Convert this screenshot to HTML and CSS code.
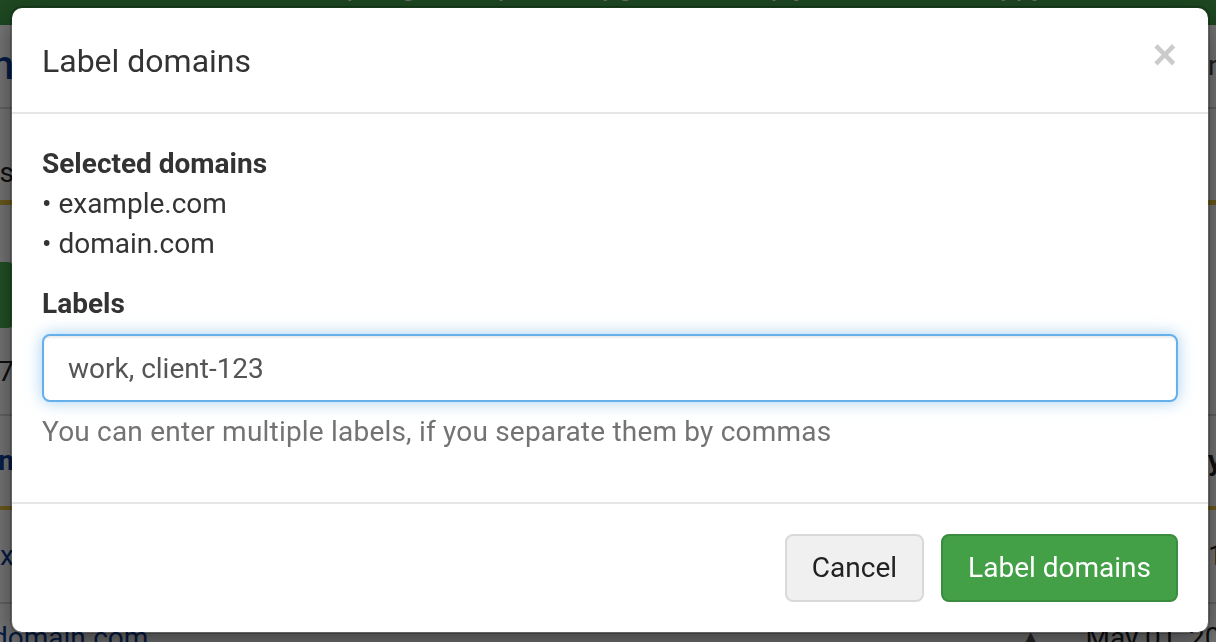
FILE: index.html
```html
<!DOCTYPE html>
<html lang="en">
<head>
<meta charset="utf-8">
<title>Label domains</title>
<link rel="stylesheet" href="styles.css">
</head>
<body>
<div class="page">
  <div class="topbar"><span class="topbar-text">Your trial is expiring soon, please upgrade to keep your domains happy</span></div>
  <div class="bg-row row-head">
    <div class="bg-left"><span class="bg-h1">Domain</span></div>
    <div class="bg-right"><span class="bg-muted">n</span></div>
  </div>
  <div class="bg-row row-tabs">
    <div class="bg-left"><span class="bg-dark">Domains</span></div>
    <div class="bg-right"></div>
  </div>
  <div class="bg-row row-actions">
    <div class="bg-left"><span class="bg-btn">Label domain</span></div>
    <div class="bg-right"></div>
  </div>
  <div class="bg-row row-count">
    <div class="bg-left"><span class="bg-dark">17</span></div>
    <div class="bg-right"></div>
  </div>
  <div class="bg-row row-th">
    <div class="bg-left"><span class="bg-link-bold">Domain nan</span></div>
    <div class="bg-right"><span class="bg-bold">y</span></div>
  </div>
  <div class="bg-row row-td">
    <div class="bg-left"><span class="bg-link">ex</span></div>
    <div class="bg-right"><span class="bg-dark">1</span></div>
  </div>
  <div class="bg-last">
    <span class="bg-link bg-first">domain.com</span>
    <span class="bg-sort">▲</span>
    <span class="bg-date">May 01, 2017</span>
  </div>
</div>

<div class="backdrop"></div>

<div class="modal-layer">
  <div class="modal" role="dialog" aria-labelledby="modal-title">
    <div class="modal-header">
      <h4 class="modal-title" id="modal-title">Label domains</h4>
      <button class="close" type="button" aria-label="Close">×</button>
    </div>
    <div class="modal-body">
      <div class="selected">
        <div class="selected-title">Selected domains</div>
        <div class="selected-item">• example.com</div>
        <div class="selected-item">• domain.com</div>
      </div>
      <div class="form-group">
        <label class="form-label" for="labels">Labels</label>
        <input class="form-control" id="labels" type="text" value="work, client-123">
        <p class="help-block">You can enter multiple labels, if you separate them by commas</p>
      </div>
    </div>
    <div class="modal-footer">
      <button class="btn btn-default" type="button">Cancel</button>
      <button class="btn btn-success" type="button">Label domains</button>
    </div>
  </div>
</div>
</body>
</html>
```

FILE: styles.css
```css
html, body {
  margin: 0;
  padding: 0;
  height: 100%;
  overflow: hidden;
}

body {
  font-family: Roboto, "Liberation Sans", Arial, sans-serif;
  color: #333;
  background: #fff;
}

/* ---------- background page (dimmed) ---------- */
.page {
  display: flex;
  flex-direction: column;
  font-size: 28px;
  line-height: 40px;
}

.topbar {
  height: 25px;
  background: #3f9a47;
  overflow: hidden;
  text-align: center;
}

.topbar-text {
  display: block;
  margin-top: -34px;
  color: #e8e8e8;
  font-size: 28px;
  line-height: 40px;
  white-space: nowrap;
}

.bg-row {
  display: flex;
  justify-content: space-between;
  align-items: center;
}

.bg-left {
  width: 14px;
  display: flex;
  justify-content: flex-end;
  white-space: nowrap;
}

.bg-right {
  width: 8px;
  display: flex;
  justify-content: flex-start;
  white-space: nowrap;
}

.row-head {
  height: 82px;
  border-bottom: 2px solid #d6d6d6;
}

.bg-h1 {
  font-size: 40px;
  color: #0d3f99;
  font-weight: 500;
}

.bg-muted {
  color: #444;
}

.row-tabs {
  height: 96px;
  border-bottom: 5px solid #e9c23f;
  align-items: flex-start;
  padding-top: 44px;
  box-sizing: border-box;
}

.bg-dark {
  color: #222;
}

.row-actions {
  height: 125px;
  align-items: flex-end;
}

.bg-btn {
  display: block;
  background: #4caf50;
  color: #fff;
  padding: 13px 24px;
  border-radius: 0 6px 6px 0;
  margin-bottom: 2px;
}

.row-count {
  height: 84px;
  border-bottom: 2px solid #d6d6d6;
}

.row-th {
  height: 90px;
  border-bottom: 4px solid #e9c23f;
}

.bg-link-bold {
  color: #0d3f99;
  font-weight: 700;
}

.bg-bold {
  color: #222;
  font-weight: 700;
}

.row-td {
  height: 92px;
  border-bottom: 2px solid #d6d6d6;
}

.bg-link {
  color: #0d3f99;
}

.bg-last {
  display: flex;
  align-items: flex-start;
  padding-top: 14px;
}

.bg-first {
  margin-left: -8px;
}

.bg-sort {
  margin-left: auto;
  color: #555;
  font-size: 22px;
}

.bg-date {
  margin-left: 44px;
  margin-right: -36px;
  color: #222;
  white-space: nowrap;
}

.backdrop {
  position: fixed;
  inset: 0;
  background: rgba(0, 0, 0, 0.52);
}

/* ---------- modal ---------- */
.modal-layer {
  position: fixed;
  inset: 0;
  padding: 6px 6px 0 10px;
}

.modal {
  background: #fff;
  background-clip: padding-box;
  border: 2px solid rgba(0, 0, 0, 0.2);
  border-radius: 12px;
  box-shadow: 0 10px 30px rgba(0, 0, 0, 0.5);
}

.modal-header {
  display: flex;
  align-items: flex-start;
  justify-content: space-between;
  padding: 32px 30px 30px 30px;
  border-bottom: 2px solid #e5e5e5;
}

.modal-title {
  margin: 0;
  font-size: 32px;
  line-height: 42px;
  font-weight: 400;
  color: #333;
}

.close {
  margin-top: -6px;
  margin-right: 1px;
  padding: 0;
  border: 0;
  background: transparent;
  font-family: "Liberation Sans", Arial, sans-serif;
  font-size: 42px;
  line-height: 42px;
  font-weight: 700;
  color: #000;
  opacity: 0.2;
  cursor: pointer;
}

.modal-body {
  padding: 30px;
  font-size: 28px;
  line-height: 40px;
}

.selected {
  margin-bottom: 20px;
}

.selected-title {
  font-weight: 700;
}

.form-group {
  display: flex;
  flex-direction: column;
}

.form-label {
  font-weight: 700;
  margin-bottom: 10px;
}

.form-control {
  box-sizing: border-box;
  width: 100%;
  height: 68px;
  padding: 12px 24px;
  font-family: inherit;
  font-size: 28px;
  line-height: 40px;
  color: #555;
  background: #fff;
  border: 2px solid #66afe9;
  border-radius: 8px;
  outline: none;
  box-shadow: inset 0 2px 2px rgba(0, 0, 0, 0.075), 0 0 16px rgba(102, 175, 233, 0.6);
}

.help-block {
  margin: 10px 0 20px;
  color: #737373;
  letter-spacing: 0.2px;
}

.modal-footer {
  display: flex;
  justify-content: flex-end;
  gap: 17px;
  padding: 30px;
  border-top: 2px solid #e5e5e5;
}

.btn {
  box-sizing: border-box;
  height: 68px;
  padding: 12px 25px;
  font-family: inherit;
  font-size: 28px;
  line-height: 40px;
  border-radius: 8px;
  border: 2px solid transparent;
  cursor: pointer;
}

.btn-default {
  background: #f0f0f0;
  border-color: #d9d9d9;
  color: #222;
}

.btn-success {
  background: #43a047;
  border-color: #3a8d3e;
  color: #fff;
}
```
